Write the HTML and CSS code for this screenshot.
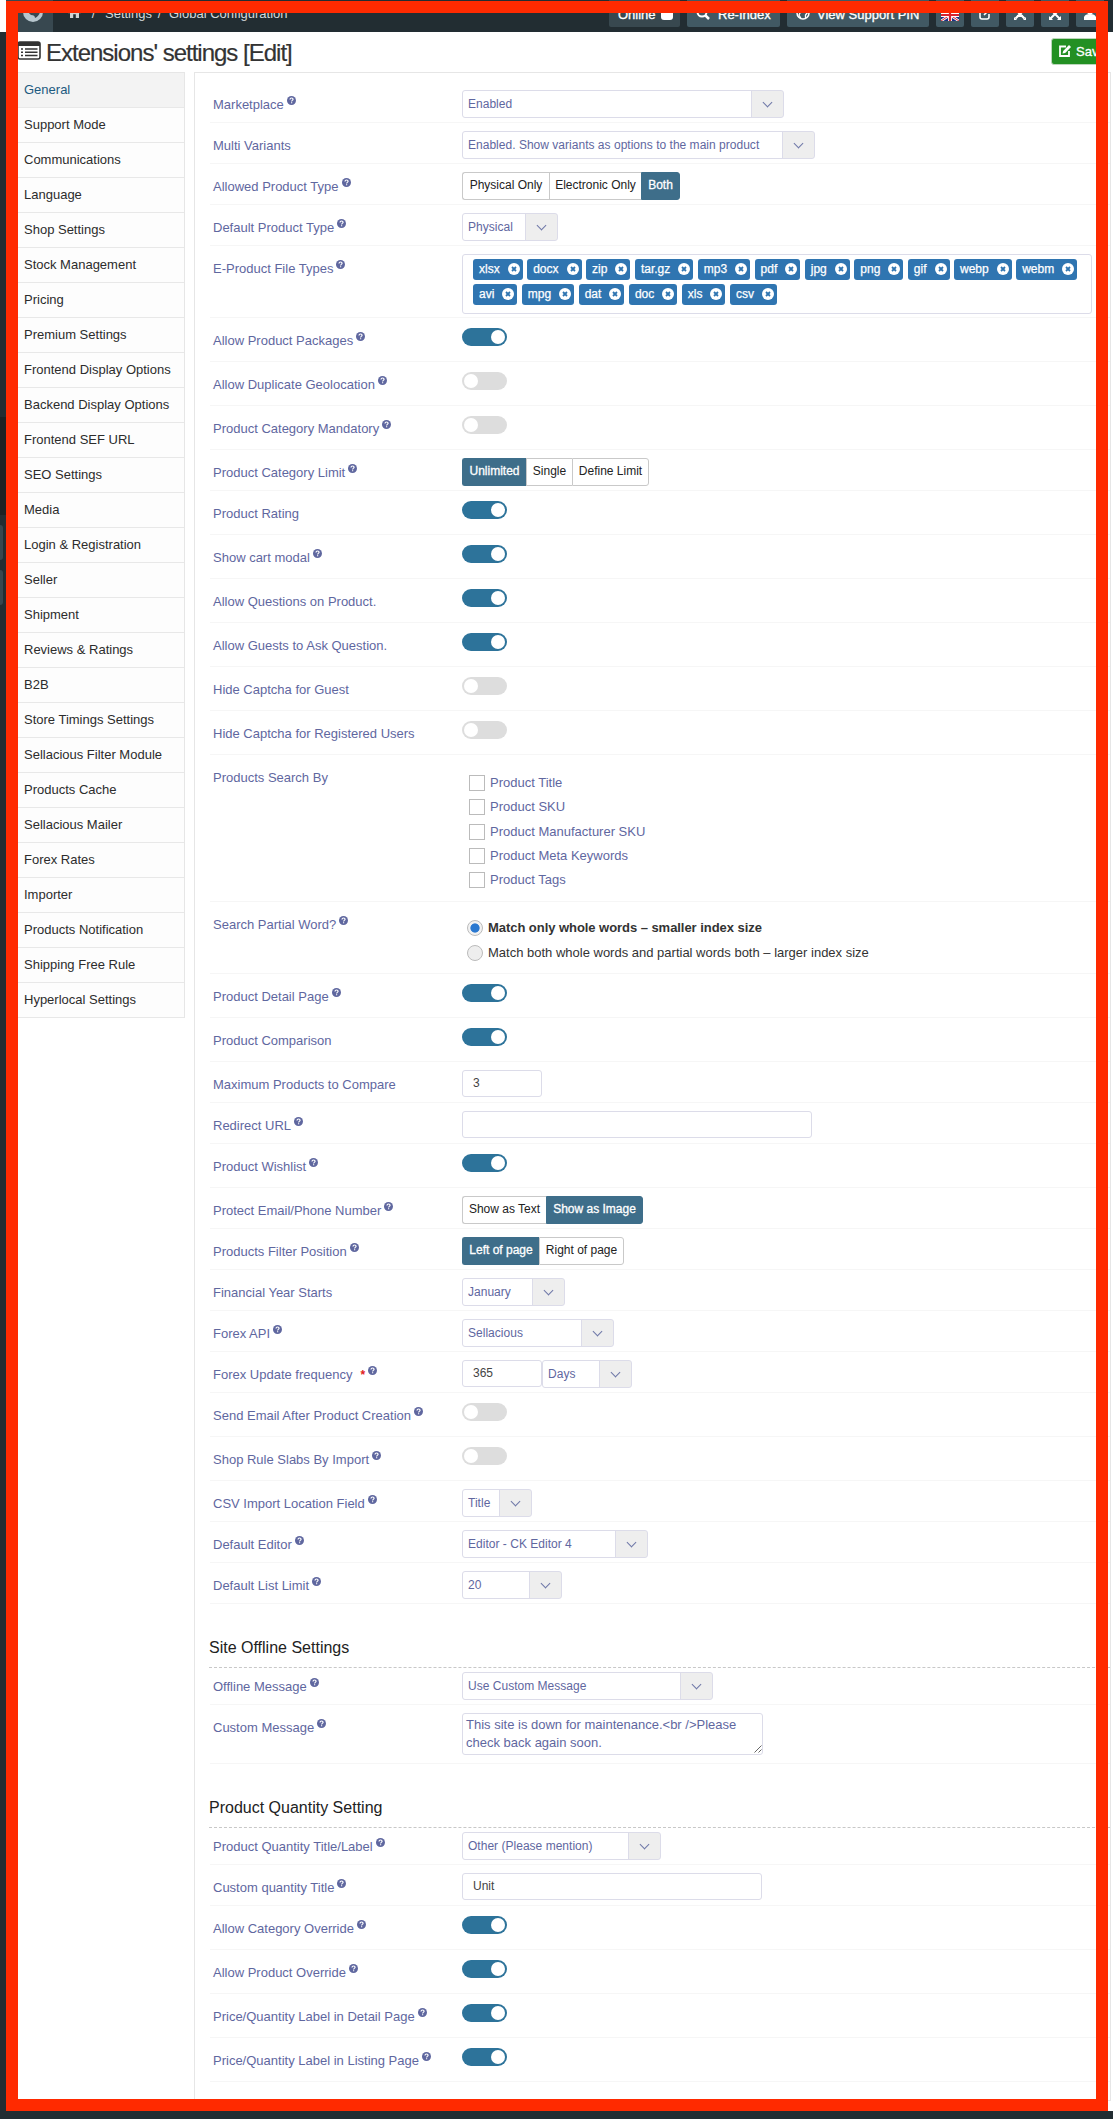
FILE: index.html
```html
<!DOCTYPE html>
<html lang="en">
<head>
<meta charset="utf-8">
<title>Extensions' settings [Edit]</title>
<link rel="stylesheet" href="styles.css">
</head>
<body>
<svg width="0" height="0" class="defs">
  <symbol id="help" viewBox="0 0 16 16"><circle cx="8" cy="8" r="8" fill="#5f679f"/><path d="M5.3 6.2C5.4 4.4 6.500 3.500 8.100 3.500C9.700 3.500 10.800 4.500 10.800 5.900C10.800 7.800 8.200 7.800 8.200 9.600M8.200 11V13" fill="none" stroke="#fff" stroke-width="2.100"/></symbol>
  <symbol id="x" viewBox="0 0 12 12"><circle cx="6" cy="6" r="6" fill="#fff"/><path d="M4 4L8 8M8 4L4 8" stroke="#2f75b1" stroke-width="1.800"/></symbol>
  <symbol id="globe" viewBox="0 0 14 14"><circle cx="7" cy="7" r="6" fill="none" stroke="currentColor" stroke-width="1.500"/><path d="M4.500 2V6L3 9L5 12.500M9.500 12.500V9L11.500 6.500M8 1.500L9.500 4L12.500 5" fill="none" stroke="currentColor" stroke-width="1.300"/></symbol>
</svg>
<div class="app">
  <nav class="rail"><i class="rail-active"></i><i class="rail-pill"></i><i class="rail-pill"></i></nav>
  <div class="main">
    <header class="topbar">
      <div class="brand"><svg width="20" height="20" viewBox="0 0 20 20"><circle cx="10" cy="10" r="10" fill="#b7c6ce"/><path d="M5 4H14V10H17Q16 14 12 16Q12 13 8 13Q5 11 5 8Z" fill="#384850"/></svg></div>
      <div class="crumbs">
        <svg class="home" width="13" height="11" viewBox="0 0 13 11"><path d="M6.500 0L13 5.600L12 6.500L11 5.700V11H7.800V7.300H5.200V11H2V5.700L1 6.500L0 5.600Z" fill="#cfd3d5"/></svg>
        <span class="slash">/</span><span class="crumb">Settings</span><span class="slash">/</span><span class="crumb crumb-last">Global Configuration</span>
      </div>
      <div class="tools">
        <span class="tool online">Online<i class="knob"></i></span>
        <span class="tool reindex"><svg width="14" height="14" viewBox="0 0 14 14"><circle cx="6" cy="6" r="4.500" fill="none" stroke="#fff" stroke-width="2"/><path d="M9.500 9.500L13 13" stroke="#fff" stroke-width="2.500"/></svg>Re-Index</span>
        <span class="tool pin"><svg width="14" height="14"><use href="#globe"/></svg>View Support PIN</span>
        <span class="tool icon flag"><svg width="18" height="12" viewBox="0 0 18 12"><path d="M0 0H18V12H0Z" fill="#1c2f86"/><path d="M0 0L18 12M18 0L0 12" stroke="#fff" stroke-width="2.600"/><path d="M0 0L18 12M18 0L0 12" stroke="#d8242f" stroke-width="1"/><path d="M9 0V12M0 6H18" stroke="#fff" stroke-width="4"/><path d="M9 0V12M0 6H18" stroke="#d8242f" stroke-width="2.200"/></svg></span>
        <span class="tool icon"><svg width="12" height="12" viewBox="0 0 12 12"><path d="M7 1H3Q1 1 1 3V9Q1 11 3 11H8Q10 11 10 9V6M5 7L11 1" fill="none" stroke="#fff" stroke-width="1.600"/></svg></span>
        <span class="tool icon"><svg width="12" height="12" viewBox="0 0 12 12"><path d="M1.500 10.500L9 3M10.500 10.500L3 3M3 8H9" fill="none" stroke="#fff" stroke-width="2.200"/><path d="M0 12V9L3 12M12 12V9L9 12" fill="#fff"/></svg></span>
        <span class="tool icon"><svg width="12" height="12" viewBox="0 0 12 12"><path d="M1 1L11 11M11 1L1 11" stroke="#fff" stroke-width="2"/><path d="M0 0H4L0 4ZM12 0V4L8 0ZM12 12H8L12 8ZM0 12V8L4 12Z" fill="#fff"/></svg></span>
        <span class="tool icon"><svg width="12" height="12" viewBox="0 0 12 12"><circle cx="6" cy="3.500" r="3" fill="#fff"/><path d="M0 12V9Q1 6 6 6T12 9V12Z" fill="#fff"/></svg></span>
      </div>
    </header>
    <div class="titlebar">
      <svg class="list-icon" width="24" height="19" viewBox="0 0 24 19"><rect x="1" y="1" width="22" height="17" rx="2" fill="#fff" stroke="#333" stroke-width="1.600"/><path d="M1 1H23V5H1Z" fill="#333"/><path d="M8 8H20.500M8 11.200H20.500M8 14.400H20.500M4 8H6M4 11.200H6M4 14.400H6" stroke="#333" stroke-width="1.500"/></svg>
      <h1>Extensions' settings [Edit]</h1>
      <span class="save"><svg width="12" height="12" viewBox="0 0 12 12"><path d="M7 1.500H1V11H10V6" fill="none" stroke="#fff" stroke-width="1.800"/><path d="M3.500 8.500L4.200 6L10 0L12 2L6.200 8Z" fill="#fff"/></svg>Save</span>
    </div>
    <div class="content">
      <ul class="tabs">
        <li class="active">General</li><li>Support Mode</li><li>Communications</li><li>Language</li><li>Shop Settings</li><li>Stock Management</li><li>Pricing</li><li>Premium Settings</li><li>Frontend Display Options</li><li>Backend Display Options</li><li>Frontend SEF URL</li><li>SEO Settings</li><li>Media</li><li>Login &amp; Registration</li><li>Seller</li><li>Shipment</li><li>Reviews &amp; Ratings</li><li>B2B</li><li>Store Timings Settings</li><li>Sellacious Filter Module</li><li>Products Cache</li><li>Sellacious Mailer</li><li>Forex Rates</li><li>Importer</li><li>Products Notification</li><li>Shipping Free Rule</li><li>Hyperlocal Settings</li>
      </ul>
      <section class="panel">
        <div class="row"><label>Marketplace<svg class="help"><use href="#help"/></svg></label><div class="select w322">Enabled</div></div>
        <div class="row"><label>Multi Variants</label><div class="select w353">Enabled. Show variants as options to the main product</div></div>
        <div class="row"><label>Allowed Product Type<svg class="help"><use href="#help"/></svg></label><div class="group"><span class="w87">Physical Only</span><span class="w92">Electronic Only</span><span class="w39 on">Both</span></div></div>
        <div class="row"><label>Default Product Type<svg class="help"><use href="#help"/></svg></label><div class="select w96">Physical</div></div>
        <div class="row row-tags"><label>E-Product File Types<svg class="help"><use href="#help"/></svg></label>
          <div class="tags">
            <div class="tagline"><span>xlsx<svg><use href="#x"/></svg></span><span>docx<svg><use href="#x"/></svg></span><span>zip<svg><use href="#x"/></svg></span><span>tar.gz<svg><use href="#x"/></svg></span><span>mp3<svg><use href="#x"/></svg></span><span>pdf<svg><use href="#x"/></svg></span><span>jpg<svg><use href="#x"/></svg></span><span>png<svg><use href="#x"/></svg></span><span>gif<svg><use href="#x"/></svg></span><span>webp<svg><use href="#x"/></svg></span><span>webm<svg><use href="#x"/></svg></span></div>
            <div class="tagline"><span>avi<svg><use href="#x"/></svg></span><span>mpg<svg><use href="#x"/></svg></span><span>dat<svg><use href="#x"/></svg></span><span>doc<svg><use href="#x"/></svg></span><span>xls<svg><use href="#x"/></svg></span><span>csv<svg><use href="#x"/></svg></span></div>
          </div></div>
        <div class="row row-switch"><label>Allow Product Packages<svg class="help"><use href="#help"/></svg></label><i class="switch on"></i></div>
        <div class="row row-switch"><label>Allow Duplicate Geolocation<svg class="help"><use href="#help"/></svg></label><i class="switch"></i></div>
        <div class="row row-switch"><label>Product Category Mandatory<svg class="help"><use href="#help"/></svg></label><i class="switch"></i></div>
        <div class="row"><label>Product Category Limit<svg class="help"><use href="#help"/></svg></label><div class="group"><span class="w64 on">Unlimited</span><span class="w46">Single</span><span class="w77">Define Limit</span></div></div>
        <div class="row row-switch"><label>Product Rating</label><i class="switch on"></i></div>
        <div class="row row-switch"><label>Show cart modal<svg class="help"><use href="#help"/></svg></label><i class="switch on"></i></div>
        <div class="row row-switch"><label>Allow Questions on Product.</label><i class="switch on"></i></div>
        <div class="row row-switch"><label>Allow Guests to Ask Question.</label><i class="switch on"></i></div>
        <div class="row row-switch"><label>Hide Captcha for Guest</label><i class="switch"></i></div>
        <div class="row row-switch"><label>Hide Captcha for Registered Users</label><i class="switch"></i></div>
        <div class="row row-checks"><label>Products Search By</label>
          <div class="checks"><span><i></i>Product Title</span><span><i></i>Product SKU</span><span><i></i>Product Manufacturer SKU</span><span><i></i>Product Meta Keywords</span><span><i></i>Product Tags</span></div></div>
        <div class="row row-radios"><label>Search Partial Word?<svg class="help"><use href="#help"/></svg></label>
          <div class="radios"><span class="checked"><i></i>Match only whole words – smaller index size</span><span><i></i>Match both whole words and partial words both – larger index size</span></div></div>
        <div class="row row-switch"><label>Product Detail Page<svg class="help"><use href="#help"/></svg></label><i class="switch on"></i></div>
        <div class="row row-switch"><label>Product Comparison</label><i class="switch on"></i></div>
        <div class="row"><label>Maximum Products to Compare</label><div class="input w80">3</div></div>
        <div class="row"><label>Redirect URL<svg class="help"><use href="#help"/></svg></label><div class="input w350"></div></div>
        <div class="row row-switch"><label>Product Wishlist<svg class="help"><use href="#help"/></svg></label><i class="switch on"></i></div>
        <div class="row"><label>Protect Email/Phone Number<svg class="help"><use href="#help"/></svg></label><div class="group"><span class="w84">Show as Text</span><span class="w97 on">Show as Image</span></div></div>
        <div class="row"><label>Products Filter Position<svg class="help"><use href="#help"/></svg></label><div class="group"><span class="w77 on">Left of page</span><span class="w85">Right of page</span></div></div>
        <div class="row"><label>Financial Year Starts</label><div class="select w103">January</div></div>
        <div class="row"><label>Forex API<svg class="help"><use href="#help"/></svg></label><div class="select w152">Sellacious</div></div>
        <div class="row"><label>Forex Update frequency<b class="star">*</b><svg class="help"><use href="#help"/></svg></label><div class="input w80">365</div><div class="select w90">Days</div></div>
        <div class="row row-switch"><label>Send Email After Product Creation<svg class="help"><use href="#help"/></svg></label><i class="switch"></i></div>
        <div class="row row-switch"><label>Shop Rule Slabs By Import<svg class="help"><use href="#help"/></svg></label><i class="switch"></i></div>
        <div class="row"><label>CSV Import Location Field<svg class="help"><use href="#help"/></svg></label><div class="select w70">Title</div></div>
        <div class="row"><label>Default Editor<svg class="help"><use href="#help"/></svg></label><div class="select w186">Editor - CK Editor 4</div></div>
        <div class="row"><label>Default List Limit<svg class="help"><use href="#help"/></svg></label><div class="select w100">20</div></div>
        <h2>Site Offline Settings</h2>
        <div class="row row-first"><label>Offline Message<svg class="help"><use href="#help"/></svg></label><div class="select w251">Use Custom Message</div></div>
        <div class="row row-area"><label>Custom Message<svg class="help"><use href="#help"/></svg></label><div class="area"><p>This site is down for maintenance.&lt;br /&gt;Please check back again soon.</p><svg width="8" height="8" viewBox="0 0 8 8"><path d="M0.500 7.500L7.500 0.500M4.500 7.500L7.500 4.500" stroke="#666" stroke-width="1"/></svg></div></div>
        <h2>Product Quantity Setting</h2>
        <div class="row row-first"><label>Product Quantity Title/Label<svg class="help"><use href="#help"/></svg></label><div class="select w199">Other (Please mention)</div></div>
        <div class="row"><label>Custom quantity Title<svg class="help"><use href="#help"/></svg></label><div class="input w300">Unit</div></div>
        <div class="row row-switch"><label>Allow Category Override<svg class="help"><use href="#help"/></svg></label><i class="switch on"></i></div>
        <div class="row row-switch"><label>Allow Product Override<svg class="help"><use href="#help"/></svg></label><i class="switch on"></i></div>
        <div class="row row-switch"><label>Price/Quantity Label in Detail Page<svg class="help"><use href="#help"/></svg></label><i class="switch on"></i></div>
        <div class="row row-switch"><label>Price/Quantity Label in Listing Page<svg class="help"><use href="#help"/></svg></label><i class="switch on"></i></div>
      </section>
    </div>
  </div>
</div>
<footer class="footer"></footer>
<div class="frame"></div>
</body>
</html>
```
FILE: styles.css
```css
* { box-sizing: border-box; }
body { margin: 0; position: relative; width: 1113px; height: 2119px; overflow: hidden; background: #fff; font: 13px/18px "Liberation Sans", Arial, sans-serif; color: #333; }
svg { display: block; flex: none; }
.defs { position: absolute; }
.app { display: flex; height: 2111px; }
.footer { height: 8px; background: #222d32; }
.frame { position: absolute; left: 6px; top: 1px; width: 1102px; height: 2110px; border: 12px solid #ff2a00; }

/* collapsed navigation */
.rail { width: 6px; margin-top: 32px; background: #222d32; padding-top: 385px; }
.rail i { display: block; }
.rail-active { height: 98px; background: #1b2224; margin-bottom: 10px; }
.rail-pill { width: 3px; height: 35px; margin-bottom: 10px; background: #37474f; border-radius: 0 3px 3px 0; }
.main { width: 1107px; }

/* top bar */
.topbar { height: 32px; display: flex; background: #222d32; color: #d5d9db; overflow: hidden; }
.brand { width: 47px; padding: 2px 0 0 17px; background: #384850; }
.crumbs { display: flex; align-items: flex-start; padding: 5px 0 0 15px; width: 556px; }
.home { margin-top: 2px; }
.slash { width: 13px; text-align: center; }
.home + .slash { margin-left: 6px; margin-right: 5px; }
.crumb + .slash { margin-left: 1px; margin-right: 3px; }
.tools { display: flex; gap: 7px; color: #fff; }
.tool { height: 27px; flex: none; display: flex; align-items: flex-start; background: #415963; border-radius: 0 0 2px 2px; padding: 6px 0 0 9px; line-height: 18px; -webkit-text-stroke: 0.300px #fff; }
.online { width: 71px; background: #38484f; }
.knob { width: 12px; height: 12px; margin: 2px 0 0 5px; border-radius: 3px; background: #fff; }
.reindex { width: 93px; gap: 8px; }
.pin { width: 142px; gap: 7px; }
.icon { width: 28px; padding: 8px 0 0; justify-content: center; }
.flag { padding-top: 9px; }

/* page title */
.titlebar { height: 40px; display: flex; align-items: flex-start; }
.list-icon { margin: 9px 0 0 11px; }
h1 { margin: 5px 0 0 5px; font-size: 24px; line-height: 31px; font-weight: 400; letter-spacing: -1px; width: 999px; -webkit-text-stroke: 0.200px #333; }
.save { display: flex; flex: none; gap: 5px; height: 27px; width: 55px; margin: 6px 0 0 6px; padding: 6px 0 0 7px; background: #239023; border: 1px solid #bcd6bc; border-radius: 3px; color: #fff; line-height: 13px; -webkit-text-stroke: 0.300px #fff; }

/* tabs */
.content { display: flex; gap: 9px; }
.tabs { list-style: none; margin: 0; padding: 0; width: 179px; height: 946px; border: 1px solid #e6e6e6; border-left: 0; background: #fdfdfd; color: #2c2c2c; }
.tabs li { height: 35px; border-bottom: 1px solid #e8e8e8; line-height: 34px; padding-left: 18px; white-space: nowrap; }
.tabs .active { background: #f3f3f3; color: #1c5a80; }

/* settings panel */
.panel { width: 917px; height: 2029px; border: 1px solid #e6e6e6; padding: 9px 0 0 15px; }
.row { height: 41px; padding: 8px 0 0 3px; display: flex; align-items: flex-start; border-bottom: 1px solid #f6f6f6; }
.row-switch { height: 44px; }
.row-tags { height: 72px; }
.row-checks { height: 147px; }
.row-radios { height: 72px; }
.row-area { height: 59px; }
.row-first { height: 37px; padding-top: 4px; }
label { display: flex; width: 249px; flex: none; padding-top: 6px; color: #5f679f; white-space: nowrap; }
.help { width: 9px; height: 9px; margin: 0 0 0 3px; }
.star { color: #e02020; font-size: 12px; margin-left: 8px; }
h2 { height: 64px; margin: 0 0 0 -1px; padding-top: 34px; border-bottom: 1px dashed #c8c8c8; font-size: 16px; line-height: 20px; font-weight: 400; color: #222; }

.select { height: 28px; border: 1px solid #dcdce9; border-radius: 3px; padding-left: 5px; line-height: 27px; font-size: 12px; letter-spacing: 0.020px; color: #5f679f; white-space: nowrap; background: linear-gradient(#dcdce9, #dcdce9) right 31px top / 1px 100% no-repeat, linear-gradient(#eee, #eee) right / 31px 100% no-repeat; display: flex; justify-content: space-between; }
.select::after { content: ""; width: 6px; height: 6px; margin: 8px 12px 0 0; border: solid #6f78a8; border-width: 0 1px 1px 0; transform: rotate(45deg); }
.input { height: 27px; border: 1px solid #dcdce9; border-radius: 3px; padding-left: 10px; line-height: 24px; font-size: 12px; color: #444; }
.group { display: flex; font-size: 12px; line-height: 24px; color: #222; }
.group span { height: 28px; border: 1px solid #c9c9c9; border-right-width: 0; text-align: center; white-space: nowrap; background: #fff; }
.group span:first-child { border-radius: 3px 0 0 3px; }
.group span:last-child { border-radius: 0 3px 3px 0; border-right-width: 1px; }
.group .on { background: #3e6e8a; border-color: #3e6e8a; color: #fff; -webkit-text-stroke: 0.300px #fff; }
.switch { width: 45px; height: 18px; margin-top: 2px; border-radius: 9px; background: #ddd; padding: 2px; }
.switch::before { content: ""; display: block; width: 14px; height: 14px; border-radius: 50%; background: #fff; }
.switch.on { background: #2d739a; }
.switch.on::before { margin-left: 27px; }
.tags { width: 630px; height: 60px; border: 1px solid #dcdce9; border-radius: 3px; padding: 4px 0 0 10px; }
.tagline { display: flex; gap: 4.500px; height: 25px; }
.tagline span { height: 21px; display: flex; gap: 8px; padding: 0 3px 0 6px; border-radius: 3px; background: #2f75b1; color: #fff; font-size: 12px; line-height: 21px; -webkit-text-stroke: 0.250px #fff; }
.tagline svg { width: 12px; height: 12px; margin-top: 4px; }
.checks { padding: 11px 0 0 7px; color: #5f679f; }
.checks span { display: flex; height: 24.300px; }
.checks i { width: 16px; height: 16px; margin: 1px 5px 0 0; border: 1px solid #bbb; }
.radios { padding: 9px 0 0 5px; color: #333; }
.radios span { display: flex; height: 25px; white-space: nowrap; }
.radios i { width: 16px; height: 16px; margin: 1px 5px 0 0; border: 1px solid #bbb; border-radius: 50%; background: #eee; }
.radios .checked { font-weight: 700; letter-spacing: -0.050px; }
.radios .checked i { background: radial-gradient(circle, #2a78d0 0 4.200px, #f2f2f2 5px); }
.area { width: 301px; height: 42px; display: flex; border: 1px solid #dcdce9; border-radius: 3px; padding-left: 3px; color: #5f679f; }
.area p { margin: 2px 0 0; width: 289px; }
.area svg { margin-top: 31px; }

.w39 { width: 39px; } .w46 { width: 46px; } .w64 { width: 64px; } .w70 { width: 70px; }
.w77 { width: 77px; } .w80 { width: 80px; } .w84 { width: 84px; } .w85 { width: 85px; }
.w87 { width: 87px; } .w90 { width: 90px; } .w92 { width: 92px; } .w96 { width: 96px; }
.w97 { width: 97px; } .w100 { width: 100px; } .w103 { width: 103px; } .w152 { width: 152px; }
.w186 { width: 186px; } .w199 { width: 199px; } .w251 { width: 251px; } .w300 { width: 300px; }
.w322 { width: 322px; } .w350 { width: 350px; } .w353 { width: 353px; }
```
